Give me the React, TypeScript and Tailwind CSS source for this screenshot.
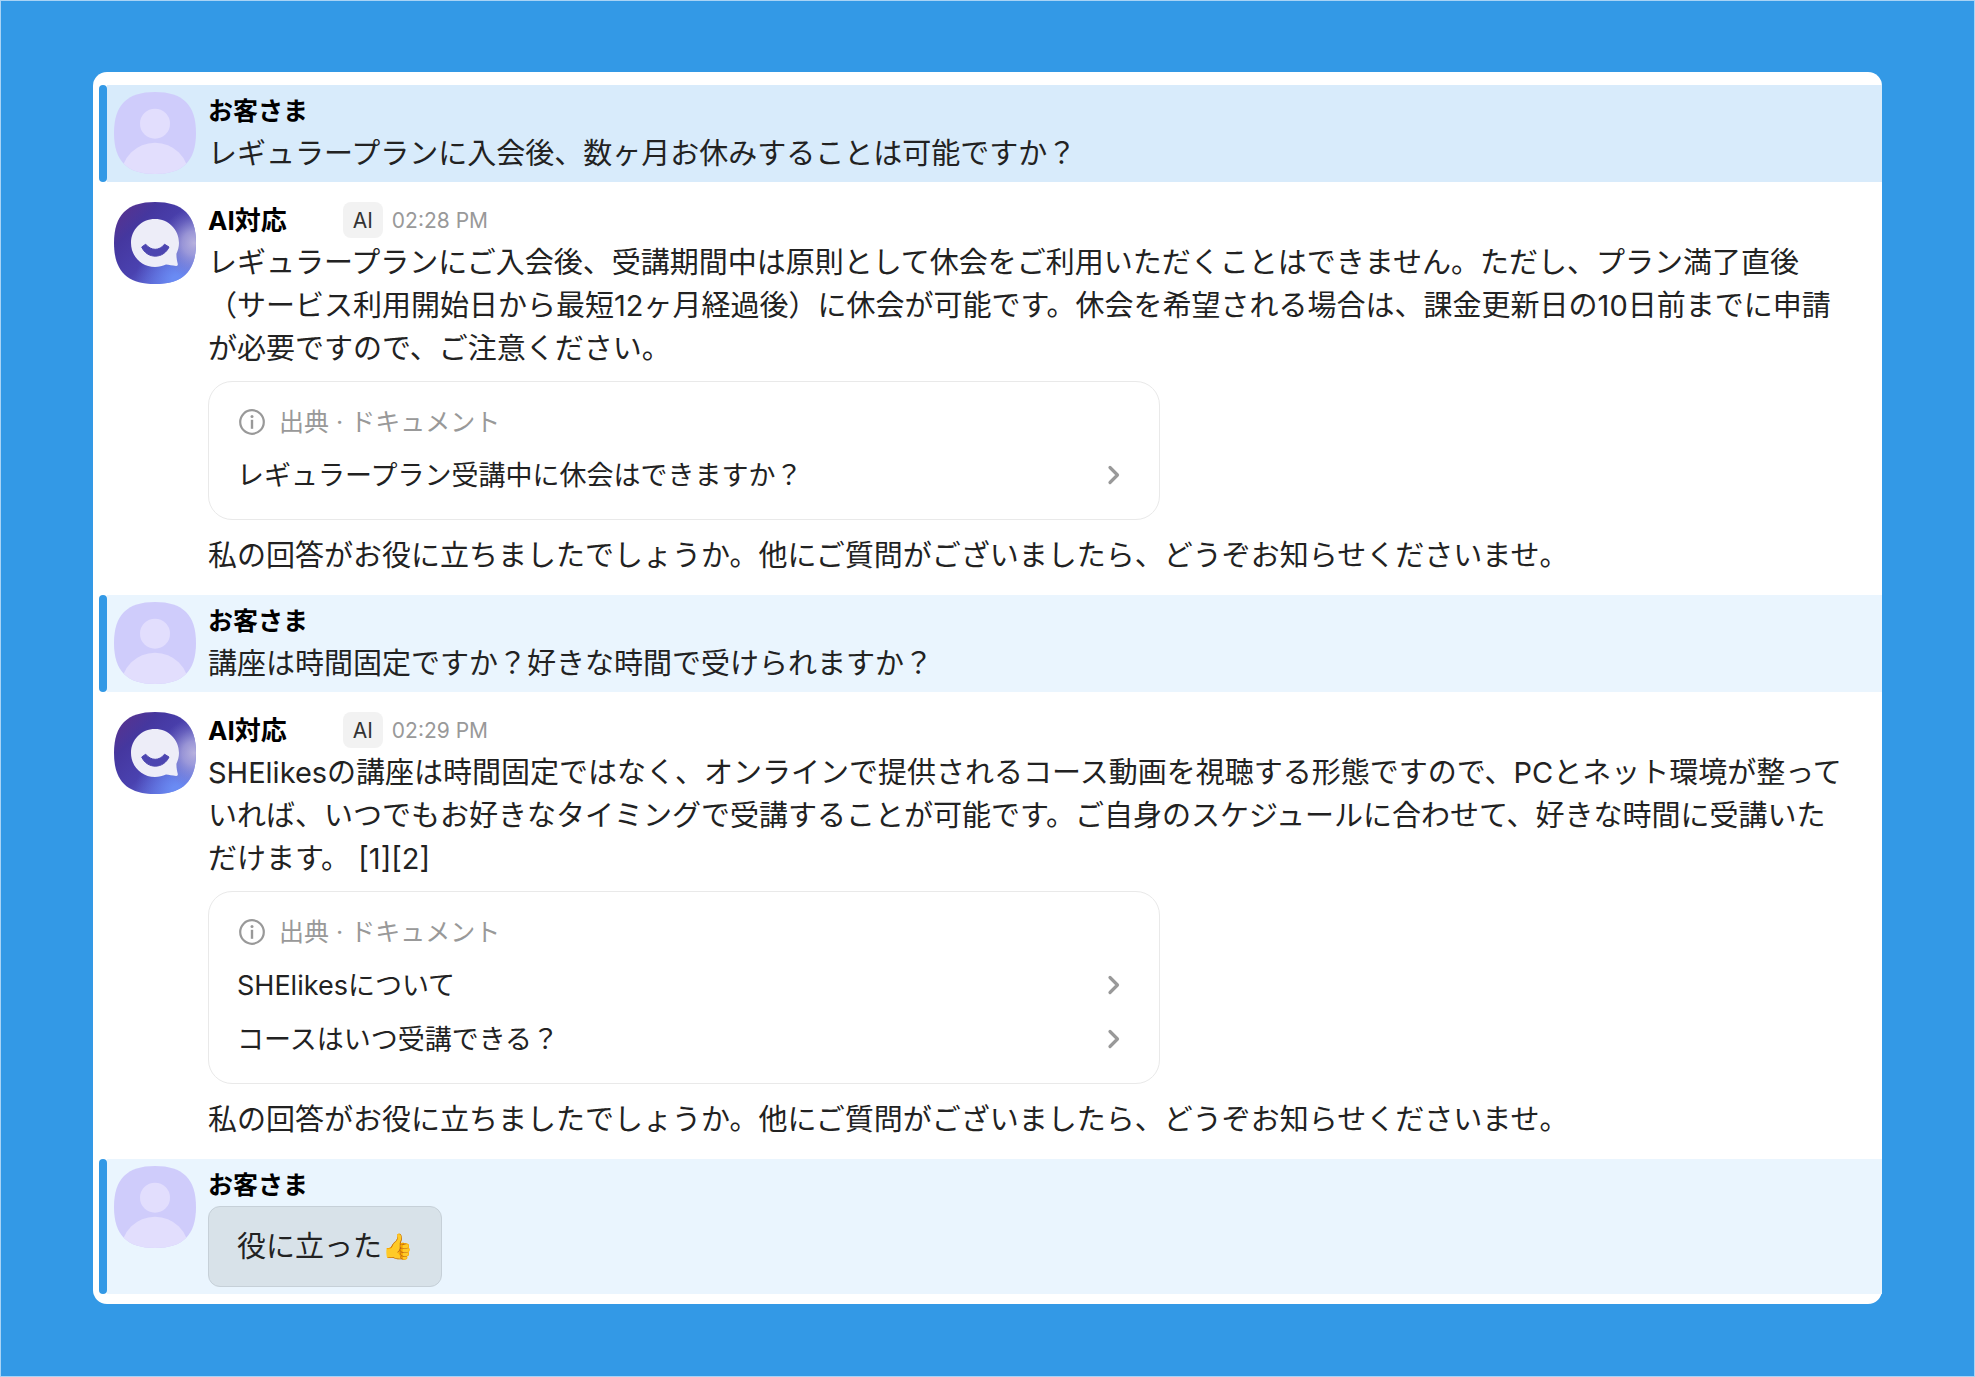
import React from "react";

type Message = {
  id: number;
  from: "customer" | "ai";
  time?: string;
  text?: string;
  reaction?: { label: string; emoji: string };
  sources?: string[];
  followUp?: string;
  highlighted?: boolean;
};

const FOLLOW_UP =
  "私の回答がお役に立ちましたでしょうか。他にご質問がございましたら、どうぞお知らせくださいませ。";

const messages: Message[] = [
  {
    id: 1,
    from: "customer",
    text: "レギュラープランに入会後、数ヶ月お休みすることは可能ですか？",
    highlighted: true,
  },
  {
    id: 2,
    from: "ai",
    time: "02:28 PM",
    text: "レギュラープランにご入会後、受講期間中は原則として休会をご利用いただくことはできません。ただし、プラン満了直後（サービス利用開始日から最短12ヶ月経過後）に休会が可能です。休会を希望される場合は、課金更新日の10日前までに申請が必要ですので、ご注意ください。",
    sources: ["レギュラープラン受講中に休会はできますか？"],
    followUp: FOLLOW_UP,
  },
  {
    id: 3,
    from: "customer",
    text: "講座は時間固定ですか？好きな時間で受けられますか？",
  },
  {
    id: 4,
    from: "ai",
    time: "02:29 PM",
    text: "SHElikesの講座は時間固定ではなく、オンラインで提供されるコース動画を視聴する形態ですので、PCとネット環境が整っていれば、いつでもお好きなタイミングで受講することが可能です。ご自身のスケジュールに合わせて、好きな時間に受講いただけます。 [1][2]",
    sources: ["SHElikesについて", "コースはいつ受講できる？"],
    followUp: FOLLOW_UP,
  },
  {
    id: 5,
    from: "customer",
    reaction: { label: "役に立った", emoji: "👍" },
  },
];

const SQUIRCLE =
  "M41 0C69 0 82 13 82 41C82 69 69 82 41 82C13 82 0 69 0 41C0 13 13 0 41 0Z";

const CustomerAvatar: React.FC<{ id: number }> = ({ id }) => (
  <svg viewBox="0 0 82 82" className="size-[82px] shrink-0" aria-hidden="true">
    <clipPath id={`clip-${id}`}>
      <path d={SQUIRCLE} />
    </clipPath>
    <g clipPath={`url(#clip-${id})`}>
      <rect width="82" height="82" fill="#cfccfb" />
      <circle cx="41" cy="31.7" r="15" fill="#e2defd" />
      <circle cx="41" cy="84.5" r="33.8" fill="#e2defd" />
    </g>
  </svg>
);

const AiAvatar: React.FC<{ id: number }> = ({ id }) => (
  <svg viewBox="0 0 82 82" className="size-[82px] shrink-0" aria-hidden="true">
    <defs>
      <linearGradient id={`base-${id}`} x1="0" y1="0" x2="1" y2="1">
        <stop offset="0.08" stopColor="#57338f" />
        <stop offset="0.28" stopColor="#45379f" />
        <stop offset="0.55" stopColor="#4a42b0" />
        <stop offset="0.9" stopColor="#6f86ee" />
      </linearGradient>
      <radialGradient id={`blue-${id}`} cx="0.76" cy="0.95" r="0.5">
        <stop offset="0.1" stopColor="#6a8bf3" />
        <stop offset="1" stopColor="#5a6ee0" stopOpacity="0" />
      </radialGradient>
      <radialGradient id={`pale-${id}`} cx="0.98" cy="0.5" r="0.42">
        <stop offset="0" stopColor="#b7b1de" />
        <stop offset="0.35" stopColor="#a9a3da" stopOpacity="0.8" />
        <stop offset="1" stopColor="#7d78c8" stopOpacity="0" />
      </radialGradient>
    </defs>
    <path d={SQUIRCLE} fill={`url(#base-${id})`} />
    <path d={SQUIRCLE} fill={`url(#blue-${id})`} />
    <path d={SQUIRCLE} fill={`url(#pale-${id})`} />
    <path
      d="M41 17C54.5 17 65 27.5 65 41C65 45 64 48 62.5 51.5C62.2 54.5 63 58.5 63.8 62C64 63.2 63.4 64 62.2 63.9C58 63.7 55 63 52 62.6C48.5 64 45 65 41 65C27.5 65 17 54.3 17 41C17 27.5 27.5 17 41 17Z"
      fill="#ededf8"
    />
    <path
      d="M31.7 42.2C37 49 45.5 49 50.5 42.2L55 45C49.5 57.2 33 57.2 27.7 45Z"
      fill="#4c45b0"
      stroke="#4c45b0"
      strokeLinejoin="round"
    />
  </svg>
);

const SourceCard: React.FC<{ sources: string[] }> = ({ sources }) => (
  <section className="mt-[11px] mb-[14px] w-full max-w-[952px] rounded-3xl border border-[#e9e9e9] px-7 pt-[14px] pb-[17px]">
    <h3 className="flex h-[52px] items-center gap-[14px] pl-[2px] text-[25px] text-[#999999]">
      <svg viewBox="0 0 26 26" className="size-[26px]" fill="none" aria-hidden="true">
        <circle cx="13" cy="13" r="11.8" stroke="#999999" strokeWidth="2.2" />
        <circle cx="13" cy="7.5" r="1.5" fill="#999999" />
        <path d="M13 10.8v9" stroke="#999999" strokeWidth="2.4" />
      </svg>
      <span>出典 · ドキュメント</span>
    </h3>
    <ul>
      {sources.map((s) => (
        <li key={s}>
          <a
            href="#"
            className="flex h-[54px] items-center justify-between text-[27px] text-[#222222]"
          >
            {s}
            <svg viewBox="0 0 36 36" className="size-9" fill="none" aria-hidden="true">
              <path
                d="M15 10.5L22.5 18L15 25.5"
                stroke="#999999"
                strokeWidth="3.2"
                strokeLinecap="round"
                strokeLinejoin="round"
              />
            </svg>
          </a>
        </li>
      ))}
    </ul>
  </section>
);

const CustomerMessage: React.FC<{ message: Message }> = ({ message }) => (
  <article className="flex">
    <div className="w-2 shrink-0 rounded-full bg-[#3399e6]" />
    <div
      className={`flex flex-1 gap-3 pt-[5px] pb-[7px] pl-[7px] ${
        message.highlighted ? "bg-[#d8ebfb]" : "bg-[#eaf5fe]"
      }`}
    >
      <div className="pt-[2px]">
        <CustomerAvatar id={message.id} />
      </div>
      <div className="pr-8">
        <h2 className="text-[25px] leading-[42px] font-bold text-black">
          お客さま
        </h2>
        {message.text && <p>{message.text}</p>}
        {message.reaction && (
          <button
            type="button"
            className="flex h-[81px] items-center rounded-xl border border-[#c6d0d8] bg-[#d8e2e9] px-7"
          >
            {message.reaction.label}
            <span className="text-[25px]">{message.reaction.emoji}</span>
          </button>
        )}
      </div>
    </div>
  </article>
);

const AiMessage: React.FC<{ message: Message }> = ({ message }) => (
  <article className="flex gap-3 pt-[17px] pr-8 pb-[18px] pl-[15px]">
    <div className="pt-[3px]">
      <AiAvatar id={message.id} />
    </div>
    <div className="flex-1">
      <header className="flex h-[42px] items-center text-[21px]">
        <h2 className="mr-14 text-[26px] font-bold text-black">AI対応</h2>
        <span className="mr-[9px] flex h-9 items-center rounded-lg bg-[#f2f2f2] px-[10px] text-[#333333]">
          AI
        </span>
        <time className="text-[#999999]">{message.time}</time>
      </header>
      <p>{message.text}</p>
      {message.sources && <SourceCard sources={message.sources} />}
      <p>{message.followUp}</p>
    </div>
  </article>
);

const App: React.FC = () => {
  return (
    <div
      lang="ja"
      className="min-h-screen border border-[#a9d3f5] bg-[#3399e6] px-[92px] py-[71px] font-['Inter','Noto_Sans_CJK_JP',sans-serif] text-[29px] leading-[43px] text-[#222222]"
    >
      <main className="rounded-[14px] bg-white pt-[13px] pb-[10px] pl-[6px]">
        {messages.map((m) =>
          m.from === "customer" ? (
            <CustomerMessage key={m.id} message={m} />
          ) : (
            <AiMessage key={m.id} message={m} />
          )
        )}
      </main>
    </div>
  );
};

export default App;
